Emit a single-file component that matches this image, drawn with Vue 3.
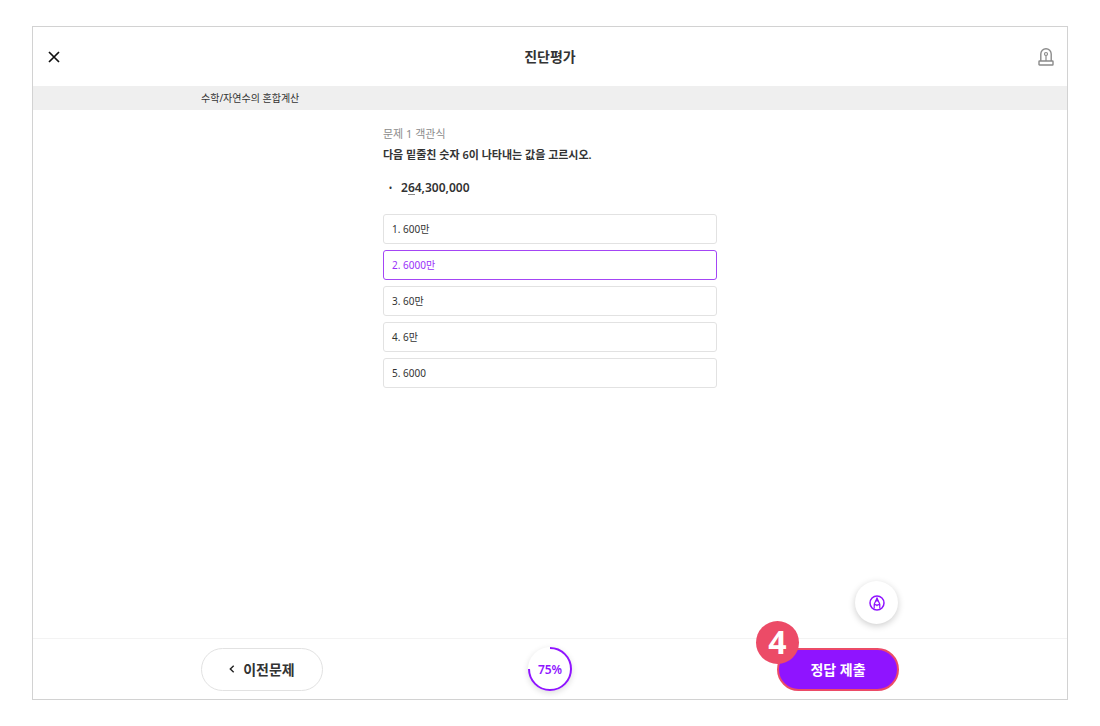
<script setup>
import { ref } from 'vue'

const options = ['600만', '6000만', '60만', '6만', '6000']
const selected = ref(1)
const progress = 75
</script>

<template>
  <main class="page">
    <div class="frame">
      <header class="header">
        <button class="icon-button" type="button" aria-label="닫기">
          <svg width="12" height="12" viewBox="0 0 12 12" fill="none" stroke="#111" stroke-width="1.7">
            <path d="M1 1l10 10M11 1L1 11" />
          </svg>
        </button>
        <h1 class="title">진단평가</h1>
        <button class="icon-button" type="button" aria-label="신고">
          <svg width="16" height="18" viewBox="0 0 16 18" fill="none" stroke="#8b8b8b" stroke-width="1.4">
            <path d="M2.8 13V6a5.2 5.2 0 0 1 10.4 0v7" />
            <rect x="1" y="13" width="14" height="4" rx=".5" />
            <circle cx="8" cy="6" r="1.5" stroke-width="1.2" />
            <path d="M8 7.5V13" stroke-width="1.2" />
          </svg>
        </button>
      </header>

      <div class="subject"><div class="wide">수학/자연수의 혼합계산</div></div>

      <section class="question">
        <p class="kind">문제 1 객관식</p>
        <h2 class="prompt">다음 밑줄친 숫자 6이 나타내는 값을 고르시오.</h2>
        <ul class="example">
          <li>2<span class="mark">6</span>4,300,000</li>
        </ul>
        <div class="options" role="radiogroup" aria-label="보기">
          <label
            v-for="(option, i) in options"
            :key="option"
            class="option"
            :class="{ active: selected === i }"
          >
            <input v-model="selected" class="radio" type="radio" name="answer" :value="i" />
            {{ i + 1 }}. {{ option }}
          </label>
        </div>
      </section>

      <footer class="footer">
        <div class="wide actions">
          <button class="pill" type="button">
            <svg width="6" height="8" viewBox="0 0 6 8" fill="none" stroke="#222" stroke-width="1.4">
              <path d="M4.7 .7L1.3 4l3.4 3.3" />
            </svg>
            이전문제
          </button>
          <div class="progress">
            <svg class="ring" width="44" height="44" viewBox="0 0 44 44" fill="none">
              <circle
                cx="22" cy="22" r="21" pathLength="100"
                stroke="#8f14ff" stroke-width="2"
                :stroke-dasharray="`${progress} 100`"
                transform="rotate(-90 22 22)"
              />
            </svg>
            <span class="percent">{{ progress }}%</span>
          </div>
          <div class="submit-wrap">
            <button class="pill submit" type="button">정답 제출</button>
            <span class="badge">4</span>
          </div>
          <button class="pen" type="button" aria-label="필기">
            <svg width="16" height="16" viewBox="0 0 16 16" fill="none" stroke="#8f14ff">
              <circle cx="8" cy="8" r="7" stroke-width="1.5" />
              <path d="M5.2 13.6V9.2L8 3.2l2.8 6v4.4M5.2 10.6c1-1.2 1.8-1.2 2.8 0 1-1.2 1.8-1.2 2.8 0" stroke-width="1.2" />
              <path d="M8 2.6l1.6 3.8H6.4z" fill="#8f14ff" stroke="none" />
            </svg>
          </button>
        </div>
      </footer>
    </div>
  </main>
</template>

<style>
html,
body,
#app {
  height: 100%;
}
body {
  margin: 0;
  background: #fff;
}
</style>

<style scoped>
.page {
  box-sizing: border-box;
  min-height: 100%;
  padding: 26px 32px;
  display: flex;
  font-family: "Noto Sans", "Noto Sans CJK KR", sans-serif;
  color: #333;
}
.frame {
  flex: 1;
  display: flex;
  flex-direction: column;
  border: 1px solid #d2d2d2;
}
button {
  font: inherit;
  color: inherit;
  padding: 0;
  cursor: pointer;
}
.header {
  height: 59px;
  padding: 0 12px;
  display: flex;
  align-items: center;
  justify-content: space-between;
}
.icon-button {
  width: 18px;
  height: 20px;
  display: grid;
  place-items: center;
  border: 0;
  background: none;
}
.title {
  margin: 0;
  font-size: 14px;
  font-weight: 600;
  line-height: 20px;
}
.subject {
  background: #efefef;
  font-size: 10px;
  line-height: 24px;
}
.wide {
  box-sizing: border-box;
  width: 100%;
  max-width: 698px;
  margin: 0 auto;
}
.question {
  flex: 1;
  box-sizing: border-box;
  width: 100%;
  max-width: 334px;
  margin: 0 auto;
  padding-top: 14px;
}
.kind {
  margin: 0;
  font-size: 11px;
  line-height: 20px;
  color: #8c8c8c;
}
.prompt {
  margin: 0;
  font-size: 11px;
  font-weight: 600;
  line-height: 22px;
}
.example {
  list-style: none;
  margin: 12px 0 16px;
  padding: 0 0 0 6px;
  font-size: 12px;
  font-weight: 600;
  line-height: 20px;
}
.example li {
  display: flex;
}
.example li::before {
  content: "•";
  width: 12px;
  font-size: 8px;
}
.mark {
  border-bottom: 1px solid #888;
  line-height: 13px;
  align-self: center;
}
.options {
  display: grid;
  gap: 6px;
}
.option {
  box-sizing: border-box;
  position: relative;
  height: 30px;
  padding: 0 8px;
  border: 1px solid #e2e2e2;
  border-radius: 3px;
  font-size: 10px;
  line-height: 28px;
  cursor: pointer;
}
.option.active {
  border-color: #a445f5;
  color: #9a2ffa;
}
.radio {
  position: absolute;
  opacity: 0;
  margin: 0;
}
.footer {
  border-top: 1px solid #f3f3f3;
}
.actions {
  position: relative;
  display: grid;
  grid-template-columns: 1fr auto 1fr;
  align-items: center;
  padding: 8px 0;
}
.pill {
  box-sizing: border-box;
  width: 122px;
  height: 43px;
  display: flex;
  align-items: center;
  justify-content: center;
  gap: 8px;
  border: 1px solid #e2e2e2;
  border-radius: 22px;
  background: #fff;
  font-size: 14px;
  font-weight: 600;
}
.submit-wrap {
  position: relative;
  justify-self: end;
}
.submit {
  border: 2px solid #ec4b67;
  background: #8f14ff;
  color: #fff;
}
.badge {
  position: absolute;
  left: -21px;
  top: -27px;
  width: 43px;
  height: 43px;
  border-radius: 50%;
  background: #ec4b67;
  color: #fff;
  font-size: 32px;
  font-weight: 700;
  line-height: 42px;
  text-align: center;
}
.progress {
  width: 44px;
  height: 44px;
  display: grid;
  place-items: center;
  border-radius: 50%;
  background: #fff;
  box-shadow: 0 2px 6px rgba(0, 0, 0, 0.14);
}
.ring,
.percent {
  grid-area: 1 / 1;
}
.percent {
  color: #8f14ff;
  font-size: 12px;
  font-weight: 600;
}
.pen {
  position: absolute;
  right: 1px;
  bottom: 75px;
  width: 43px;
  height: 43px;
  display: grid;
  place-items: center;
  border: 0;
  border-radius: 50%;
  background: #fff;
  box-shadow: 0 2px 7px rgba(0, 0, 0, 0.2);
}
</style>
